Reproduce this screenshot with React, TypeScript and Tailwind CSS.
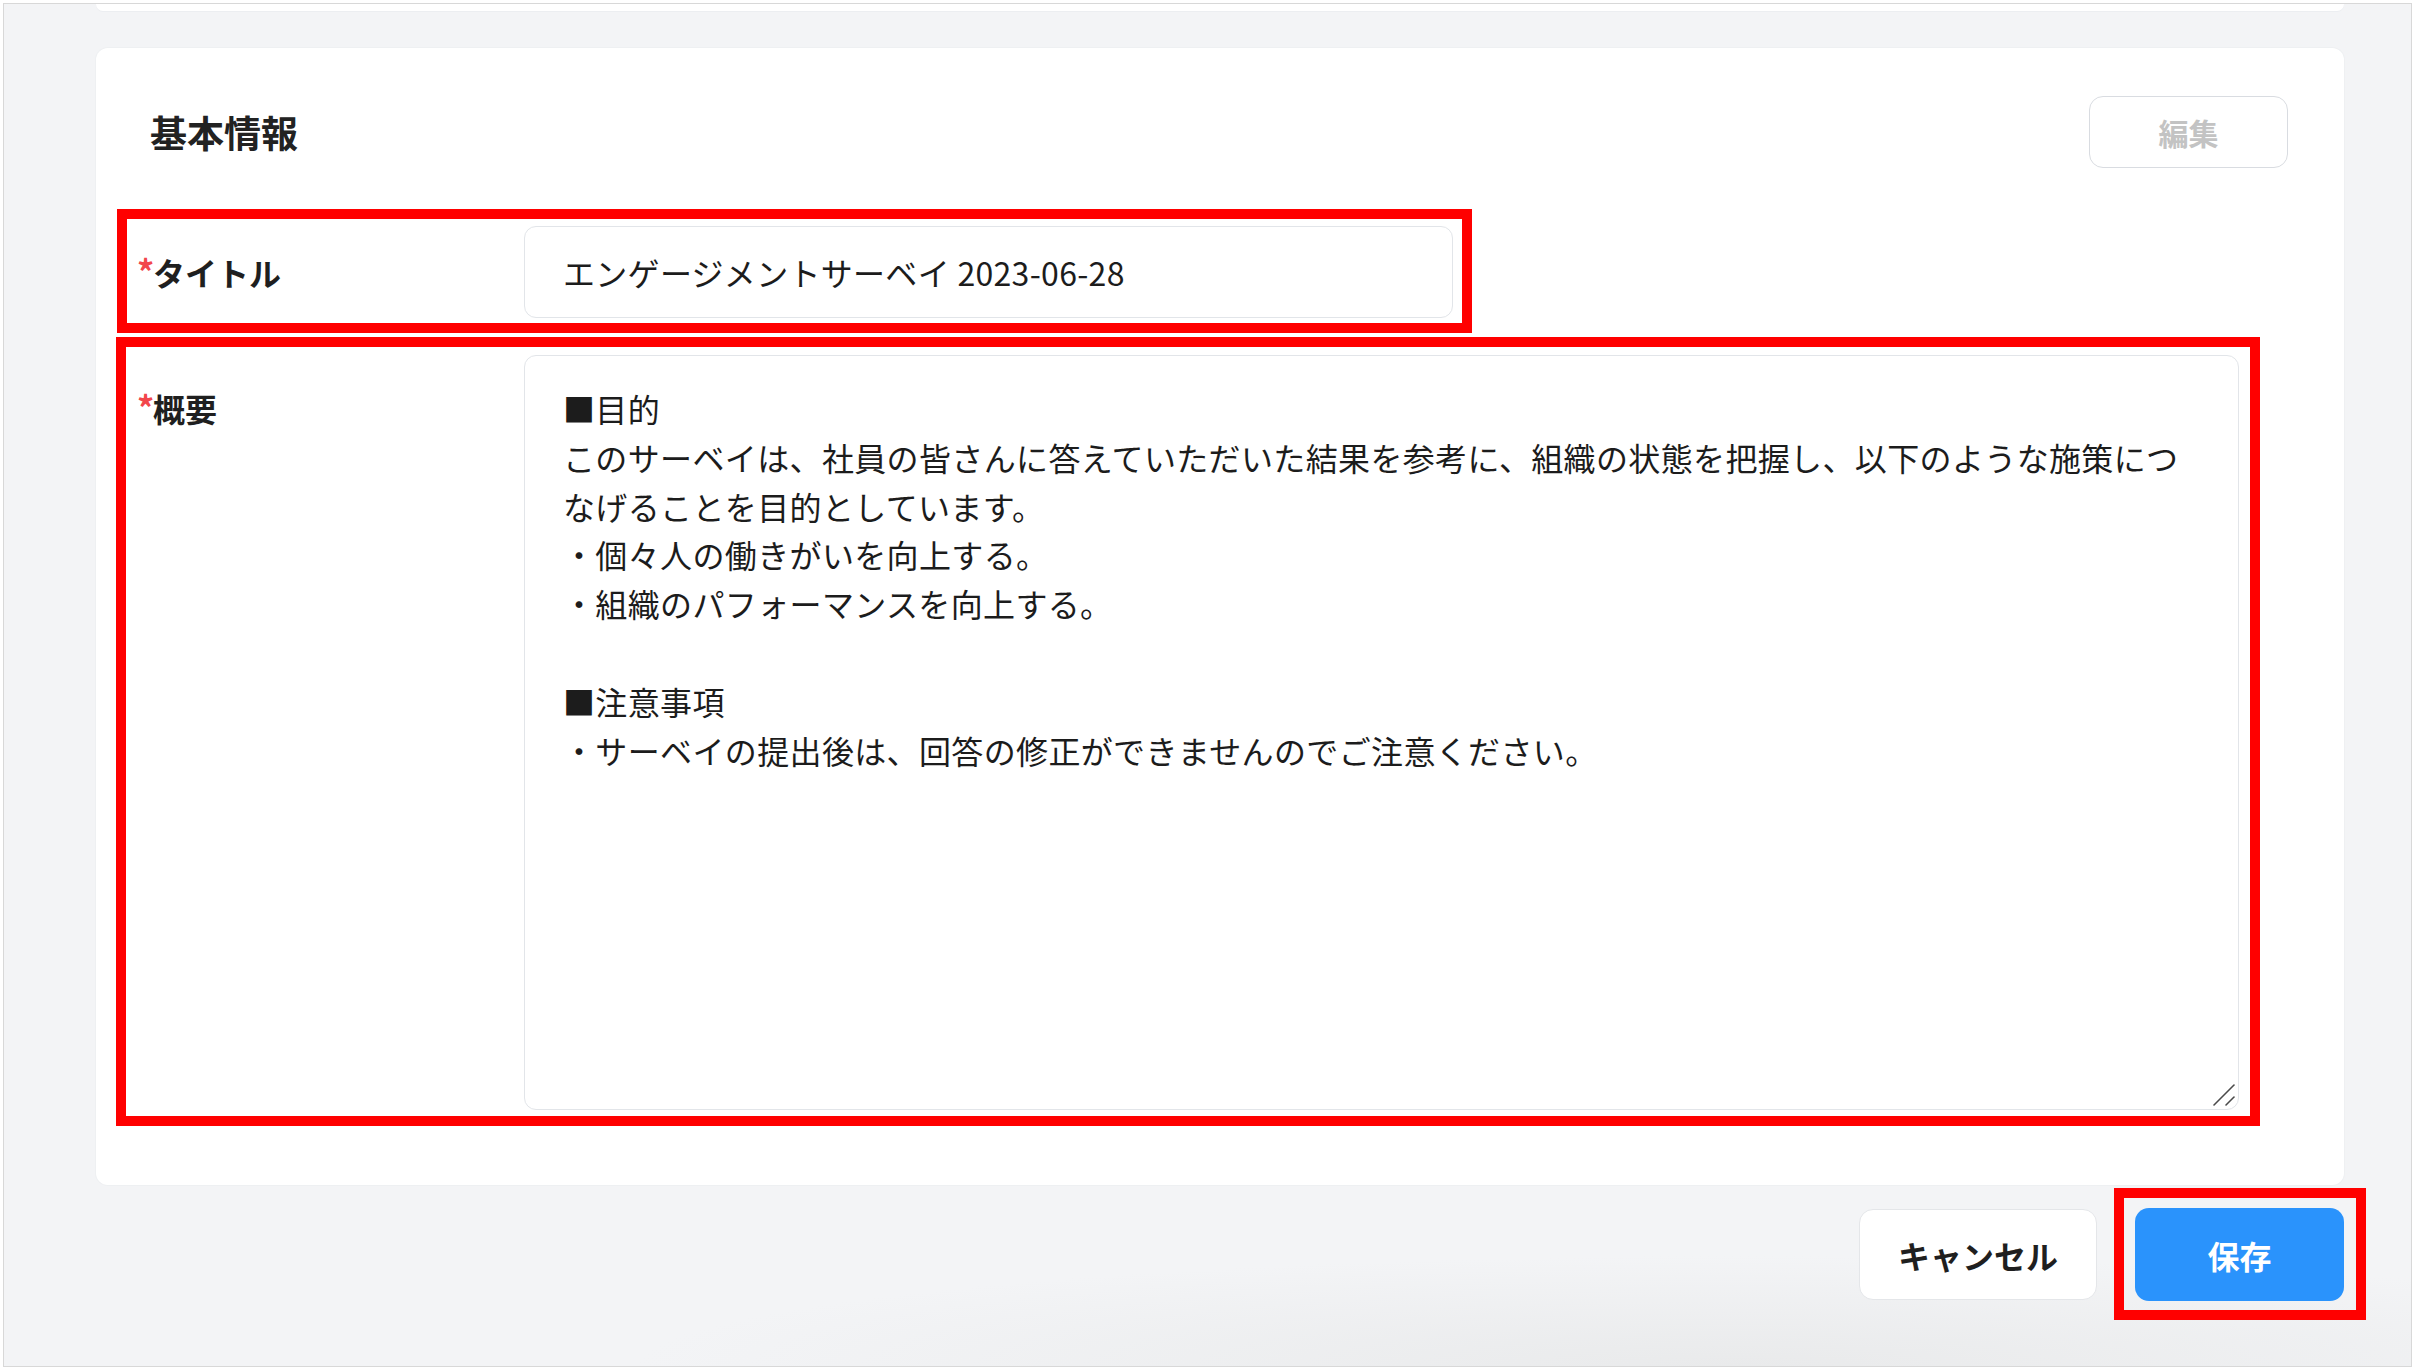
import type { ReactNode } from 'react';

const OVERVIEW = `■目的
このサーベイは、社員の皆さんに答えていただいた結果を参考に、組織の状態を把握し、以下のような施策につなげることを目的としています。
・個々人の働きがいを向上する。
・組織のパフォーマンスを向上する。

■注意事項
・サーベイの提出後は、回答の修正ができませんのでご注意ください。`;

/** Required-field label with the red asterisk sitting at the cap line. */
function FieldLabel({ children, className = '' }: { children: ReactNode; className?: string }) {
  return (
    <label className={`flex w-[387px] shrink-0 items-start text-[32px] font-bold leading-[48.8px] text-[#1f1f1f] ${className}`}>
      <span className="mt-[6px] w-[16px] text-[34px] font-bold leading-none text-[#f2464b]">*</span>
      <span>{children}</span>
    </label>
  );
}

// Red annotation frames drawn over the form in the screenshot.
function Mark({ className }: { className: string }) {
  return <div className={`pointer-events-none absolute border-[10px] border-[#ff0000] ${className}`} />;
}

export default function App() {
  return (
    <div className="h-[1370px] w-[2415px] bg-white p-[3px] font-['Noto_Sans_CJK_JP',sans-serif]">
      <div className="relative h-full w-full overflow-hidden border border-[#d8d8d8] bg-[#f3f4f6] bg-[radial-gradient(ellipse_1100px_110px_at_72%_100%,#e9eaeb,#f3f4f6)]">
        {/* tail of the previous card */}
        <div className="ml-[92px] h-[7px] w-[2248px] rounded-b-[12px] bg-white shadow-[0_1px_0_#eceef1]" />

        <section className="ml-[92px] mt-[37px] h-[1137px] w-[2248px] rounded-[12px] bg-white shadow-[0_0_0_1px_#eef0f2]">
          <div className="flex items-center justify-between pl-[54px] pr-[56px] pt-[48px]">
            <h2 className="text-[37px] font-bold leading-none text-[#222]">基本情報</h2>
            <button type="button" className="h-[72px] w-[199px] rounded-[14px] border border-[#d9dce1] bg-white text-[30px] font-bold text-[#c3c3c3]">
              編集
            </button>
          </div>

          <div className="mt-[58px] flex flex-col gap-[37px] pl-[41px]">
            <div className="flex items-center">
              <FieldLabel>タイトル</FieldLabel>
              <input
                defaultValue="エンゲージメントサーベイ 2023-06-28"
                className="h-[92px] w-[929px] rounded-[12px] border border-[#e2e5e9] bg-white pl-[38px] text-[32px] tracking-[0.3px] text-[#1c1c1c] outline-none"
              />
            </div>
            <div className="flex items-start">
              <FieldLabel className="pt-[29px]">概要</FieldLabel>
              <div className="relative">
                <textarea
                  defaultValue={OVERVIEW}
                  className="block h-[755px] w-[1715px] resize-none rounded-[12px] border border-[#e2e5e9] bg-white pb-[20px] pl-[38px] pr-[40px] pt-[28px] text-[32px] leading-[48.8px] tracking-[0.36px] text-[#1c1c1c] outline-none"
                />
                {/* resize grip */}
                <svg className="pointer-events-none absolute bottom-[3px] right-[3px]" width="24" height="24" viewBox="0 0 24 24" fill="none" stroke="#4a4a4a" strokeWidth="1.6" strokeLinecap="round">
                  <path d="M2 22 L22 2" />
                  <path d="M14 22 L22 14" />
                </svg>
              </div>
            </div>
          </div>
        </section>

        <div className="mt-[23px] flex w-[2340px] items-start justify-end gap-[38px]">
          <button type="button" className="mt-[1px] h-[91px] w-[238px] rounded-[14px] border border-[#e4e6e9] bg-white text-[32px] font-bold text-[#1f1f1f]">
            キャンセル
          </button>
          <button type="button" className="h-[93px] w-[209px] rounded-[14px] bg-[#2a93fc] text-[32px] font-bold text-white">
            保存
          </button>
        </div>

        <Mark className="left-[113px] top-[205px] h-[124px] w-[1355px]" />
        <Mark className="left-[112px] top-[333px] h-[789px] w-[2144px]" />
        <Mark className="left-[2110px] top-[1184px] h-[132px] w-[252px]" />
      </div>
    </div>
  );
}
